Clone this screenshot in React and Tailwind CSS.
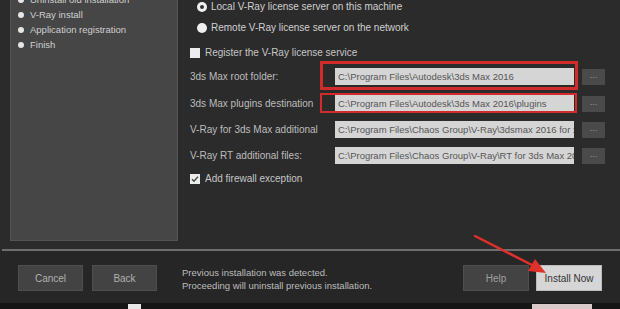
import React from "react";

function Bullet({ children }) {
  return (
    <div className="flex items-center h-[15px]">
      <span className="w-[6px] h-[6px] rounded-full bg-[#e6e6e6] ml-[5px] mr-[6px]" />
      <span className="text-[9.5px] text-[#cfcfcf] leading-none">{children}</span>
    </div>
  );
}

function InputRow({ label, value, mt }) {
  return (
    <div className={`flex items-center h-[17px] ${mt}`}>
      <div className="w-[145px] text-[10px] text-[#bdbdbd] leading-none whitespace-nowrap">{label}</div>
      <div className="w-[239px] h-[17px] bg-[#d5d5d5] text-[9.5px] text-[#555] leading-[17px] pl-[3px] overflow-hidden whitespace-nowrap">
        {value}
      </div>
      <div className="ml-[8px] w-[23px] h-[16px] bg-[#4a4a4a] text-[#9a9a9a] text-[9px] leading-[12px] text-center">...</div>
    </div>
  );
}

export default function App() {
  return (
    <div className="w-[620px] h-[309px] bg-[#2b2b2b] relative overflow-hidden font-['Liberation_Sans',Arial,sans-serif]">
      <div className="flex h-[241px]">
        <div className="ml-[10px] w-[168px] h-[241px] bg-[#464646] border-x border-b border-[#545454] overflow-hidden">
          <div className="mt-[-8px] ml-[2px] flex flex-col">
            <Bullet>Uninstall old installation</Bullet>
            <Bullet>V-Ray install</Bullet>
            <Bullet>Application registration</Bullet>
            <Bullet>Finish</Bullet>
          </div>
        </div>
        <div className="flex-1 pl-[12px] flex flex-col">
          <div className="flex items-center h-[14px]">
            <span className="ml-[7px] w-[10px] h-[10px] rounded-full bg-[#f0f0f0] flex items-center justify-center">
              <span className="w-[4px] h-[4px] rounded-full bg-[#333]" />
            </span>
            <span className="ml-[4px] text-[10px] text-[#cfcfcf] leading-none">Local V-Ray license server on this machine</span>
          </div>
          <div className="flex items-center h-[14px] mt-[7px]">
            <span className="ml-[7px] w-[10px] h-[10px] rounded-full bg-[#f0f0f0]" />
            <span className="ml-[4px] text-[10px] text-[#cfcfcf] leading-none">Remote V-Ray license server on the network</span>
          </div>
          <div className="flex items-center h-[14px] mt-[11px]">
            <span className="w-[10px] h-[10px] bg-[#ececec]" />
            <span className="ml-[5px] text-[10px] text-[#c6c6c6] leading-none">Register the V-Ray license service</span>
          </div>
          <InputRow mt="mt-[8px]" label="3ds Max root folder:" value={"C:\\Program Files\\Autodesk\\3ds Max 2016"} />
          <InputRow mt="mt-[10px]" label="3ds Max plugins destination" value={"C:\\Program Files\\Autodesk\\3ds Max 2016\\plugins"} />
          <InputRow mt="mt-[9px]" label="V-Ray for 3ds Max additional" value={"C:\\Program Files\\Chaos Group\\V-Ray\\3dsmax 2016 for x64"} />
          <InputRow mt="mt-[9px]" label="V-Ray RT additional files:" value={"C:\\Program Files\\Chaos Group\\V-Ray\\RT for 3ds Max 2016 for x64"} />
          <div className="flex items-center h-[14px] mt-[8px]">
            <span className="w-[10px] h-[10px] bg-[#ececec] flex items-center justify-center">
              <svg width="8" height="8" viewBox="0 0 8 8">
                <path d="M1 4.2 L3 6.2 L7 1.6" stroke="#444" strokeWidth="1.4" fill="none" />
              </svg>
            </span>
            <span className="ml-[5px] text-[10px] text-[#c6c6c6] leading-none">Add firewall exception</span>
          </div>
        </div>
      </div>
      <div className="h-[8px]" />
      <div className="h-[2px] bg-[#6e6e6e] ml-[2px]" />
      <div className="h-[52px] bg-[#262626] flex items-start pt-[14px] pl-[18px] pr-[18px]">
        <div className="w-[65px] h-[26px] bg-[#434343] border border-[#4e4e4e] text-[10px] text-[#b0b0b0] flex items-center justify-center">Cancel</div>
        <div className="ml-[9px] w-[65px] h-[26px] bg-[#434343] border border-[#4e4e4e] text-[10px] text-[#b0b0b0] flex items-center justify-center">Back</div>
        <div className="ml-[25px] mt-[1px] text-[9.5px] leading-[13px] text-[#bdbdbd]">
          <div>Previous installation was detected.</div>
          <div>Proceeding will uninstall previous installation.</div>
        </div>
        <div className="flex-1" />
        <div className="w-[66px] h-[26px] bg-[#434343] border border-[#4e4e4e] text-[10px] text-[#a0a0a0] flex items-center justify-center">Help</div>
        <div className="ml-[7px] w-[66px] h-[26px] bg-[#d6d6d6] border border-[#bbb] text-[10px] text-[#333] flex items-center justify-center">Install Now</div>
      </div>
      <div className="h-[6px] bg-[#151515] flex">
        <div className="ml-[128px] w-[13px] h-[6px] mt-[1px] bg-[#e8e8e8]" />
        <div className="ml-[391px] w-[60px] h-[6px] mt-[1px] bg-[#d9c9c9]" />
      </div>

      {/* red annotation boxes */}
      <div className="absolute left-[320px] top-[61px] w-[258px] h-[29px] border-[3px] border-[#d22b2b]" />
      <div className="absolute left-[320px] top-[93px] w-[257px] h-[20px] border-2 border-[#d22b2b]" />

      {/* red arrow */}
      <svg className="absolute left-0 top-0" width="620" height="309" viewBox="0 0 620 309">
        <line x1="475" y1="236" x2="536" y2="267" stroke="#e0302c" strokeWidth="2.5" strokeLinecap="round" />
        <polygon points="546,273 528,271 535,259" fill="#e0302c" />
      </svg>
    </div>
  );
}
